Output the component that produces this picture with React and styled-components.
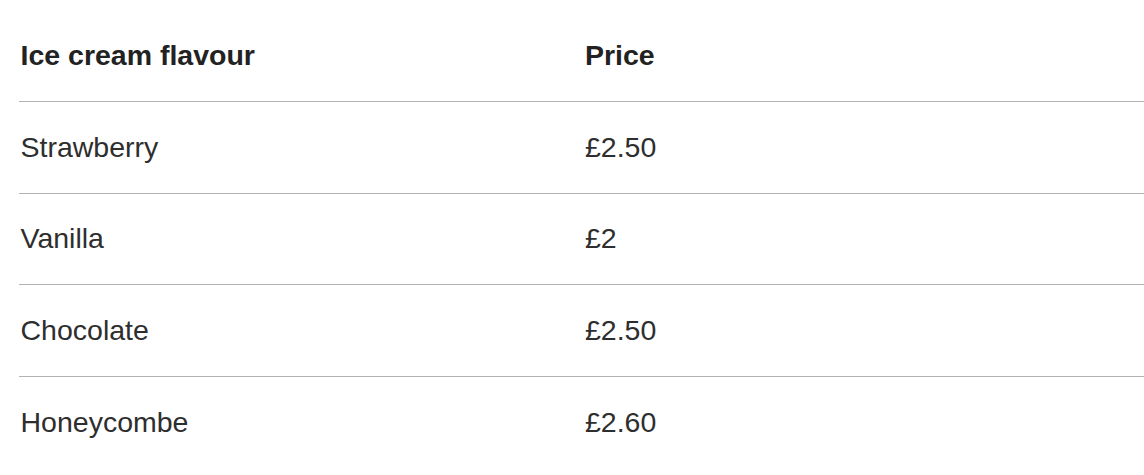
import React from 'react'
import styled, { createGlobalStyle } from 'styled-components'

//#region styled css
const GlobalStyle = createGlobalStyle`
    html, body {
        margin: 0;
        padding: 0;
        background: #fff;
        overflow: hidden;
    }
`;

const Page = styled.div`
    padding: 10.3px 0 0 19px;
    font-family: "Liberation Sans", Arial, sans-serif;
    color: #2b2b2b;
`;

const Table = styled.table`
    width: 100%;
    border-collapse: collapse;
    border-spacing: 0;
    font-size: 28.5px;
    line-height: 37.5px;
`;

const Cell = styled.td`
    padding: 26.6px 20px 26.6px ${props => (props.$first ? '1.5px' : '0')};
    text-align: left;
    vertical-align: top;
    font-weight: ${props => (props.$head ? 700 : 400)};
    color: ${props => (props.$head ? '#222' : '#2e2e2e')};
    width: ${props => props.$width || 'auto'};
    border-bottom: ${props => (props.$last ? 'none' : '1px solid #b1b4b6')};
`;
//#endregion

const flavours = [
    { name: "Strawberry", price: "£2.50" },
    { name: "Vanilla", price: "£2" },
    { name: "Chocolate", price: "£2.50" },
    { name: "Honeycombe", price: "£2.60" },
];

function App() {
    return (
        <Page>
            <GlobalStyle />
            <Table>
                <thead>
                    <tr>
                        <Cell as="th" $head $first $width="544.5px">Ice cream flavour</Cell>
                        <Cell as="th" $head>Price</Cell>
                    </tr>
                </thead>
                <tbody>
                    {flavours.map((f, i) => (
                        <tr key={f.name}>
                            <Cell $first $last={i === flavours.length - 1}>{f.name}</Cell>
                            <Cell $last={i === flavours.length - 1}>{f.price}</Cell>
                        </tr>
                    ))}
                </tbody>
            </Table>
        </Page>
    )
}

export default App
